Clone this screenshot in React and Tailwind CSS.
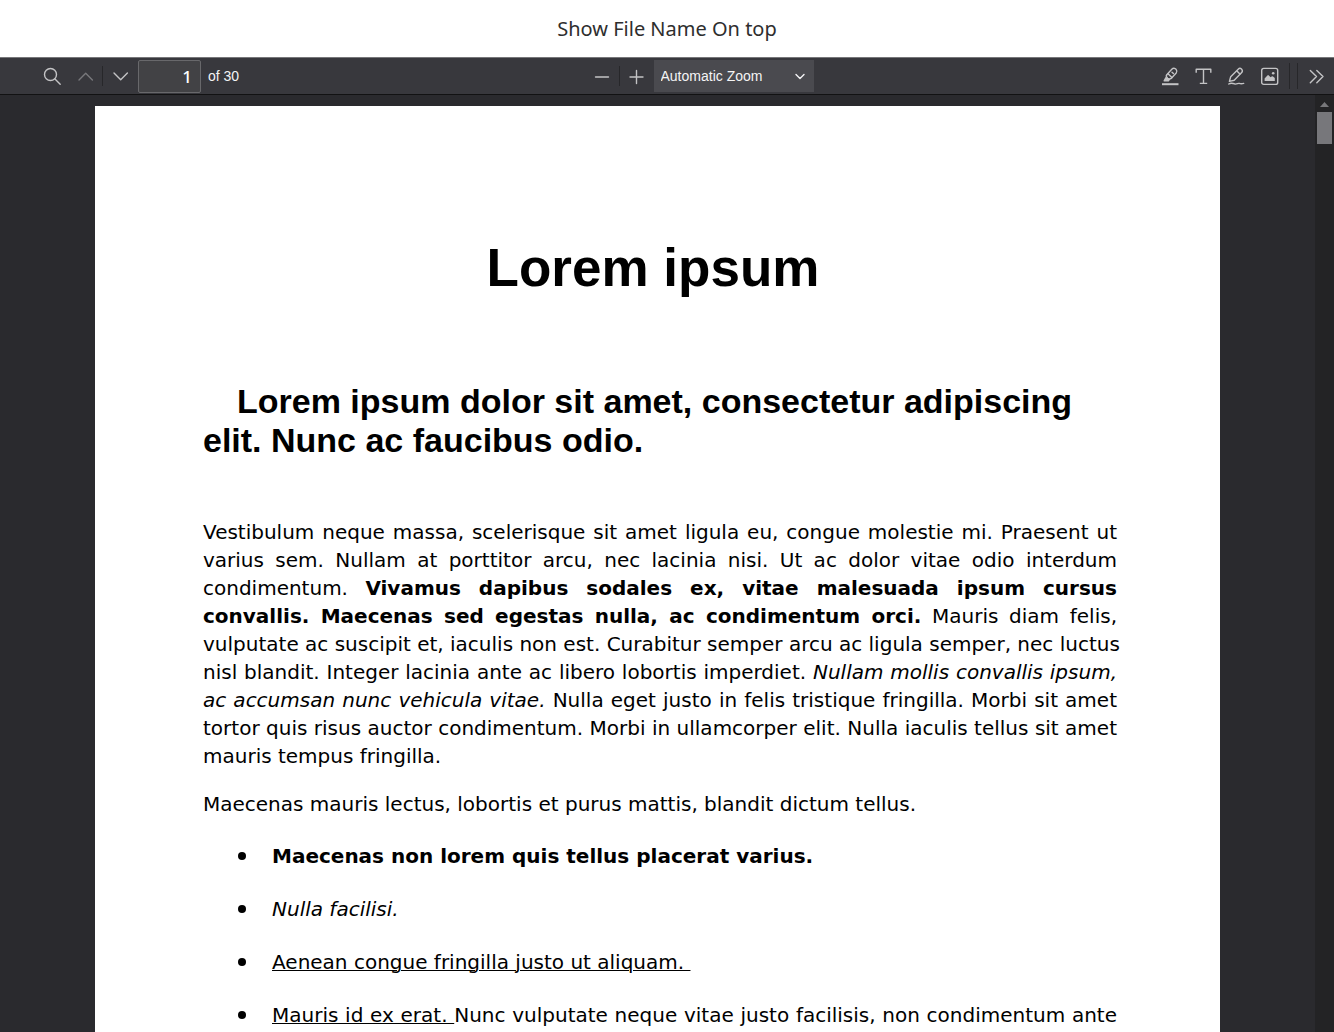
import React from "react";

function Icon({ children, className = "size-5" }) {
  return (
    <svg
      viewBox="0 0 20 20"
      className={className}
      fill="none"
      stroke="currentColor"
      strokeWidth="1.4"
      strokeLinecap="round"
      strokeLinejoin="round"
      aria-hidden="true"
    >
      {children}
    </svg>
  );
}

function ToolButton({ label, disabled, children, className = "w-[33px]" }) {
  return (
    <button
      type="button"
      aria-label={label}
      title={label}
      disabled={disabled}
      className={`flex h-8 shrink-0 items-center justify-center text-[#c3c3c5] disabled:text-[#78787c] ${className}`}
    >
      {children}
    </button>
  );
}

function Separator({ className = "h-5" }) {
  return <span className={`w-px shrink-0 bg-[#27272a] ${className}`} />;
}

function Toolbar() {
  return (
    <div className="grid h-[38px] shrink-0 grid-cols-[1fr_auto_1fr] items-center border-t border-b border-t-[#77777a] border-b-[#121213] bg-[#38383d] font-['Liberation_Sans',Arial,sans-serif] text-[14px] text-[#f4f4f5]">
      <div className="flex items-center pl-9">
        <ToolButton label="Find in document">
          <Icon>
            <circle cx="7.5" cy="8.5" r="6" />
            <path d="M12 13 17.2 18.2" />
          </Icon>
        </ToolButton>
        <ToolButton label="Previous page" disabled>
          <Icon>
            <path d="M3 14 9.7 7.3 16.4 14" />
          </Icon>
        </ToolButton>
        <Separator />
        <ToolButton label="Next page">
          <Icon>
            <path d="M4 7 10.7 13.7 17.4 7" />
          </Icon>
        </ToolButton>
        <input
          type="text"
          aria-label="Page number"
          defaultValue="1"
          className="ml-0.5 h-[33px] w-[63px] rounded-xs border border-[#68686b] bg-[#424245] pr-2 text-right font-['Noto_Sans',sans-serif] text-[17px] font-medium text-white outline-none"
        />
        <span className="ml-[7px] whitespace-nowrap">of 30</span>
      </div>

      <div className="flex items-center pl-[65px]">
        <ToolButton label="Zoom out">
          <Icon>
            <path d="M3.5 11H16.5" />
          </Icon>
        </ToolButton>
        <Separator />
        <ToolButton label="Zoom in">
          <Icon>
            <path d="M4 11H17M10.5 4.5V17.5" />
          </Icon>
        </ToolButton>
        <div className="ml-px grid w-40 items-center">
          <select
            aria-label="Zoom"
            className="col-start-1 row-start-1 h-8 w-full appearance-none bg-[#4a4a4f] pl-[7px] text-[14px] outline-none"
          >
            <option>Automatic Zoom</option>
            <option>Actual Size</option>
            <option>Page Fit</option>
            <option>Page Width</option>
          </select>
          <Icon className="pointer-events-none col-start-1 row-start-1 mr-1 size-5 justify-self-end">
            <path d="M6 8.5 10 12.5 14 8.5" />
          </Icon>
        </div>
      </div>

      <div className="flex items-center justify-end">
        <ToolButton label="Highlight">
          <Icon>
            <path d="M1 18.2H17.5" strokeWidth="2" strokeLinecap="butt" />
            <path d="M5.8 8.7 10.8 3.2Q12.6 1.4 14.4 2.8L15.2 3.6Q16.6 5.2 15.2 7L10.2 12.4Q8.4 13.8 6.6 12.2L6.2 11.8Q4.6 10.4 5.8 8.7Z" />
            <path d="M7 7.7 10.9 11.4M11 6.2 12.4 7.6" />
            <path d="M4.8 11.8 3.2 14.8H7.4L8.4 13.4Z" fill="currentColor" />
          </Icon>
        </ToolButton>
        <ToolButton label="Text">
          <Icon>
            <path d="M2.2 6V3.2H16.8V6M9.5 3.2V17.2M6.5 17.4H12.5" strokeLinecap="square" />
          </Icon>
        </ToolButton>
        <ToolButton label="Draw">
          <Icon>
            <path d="M3.7 10.8 11.2 3.2Q12.8 1.6 14.5 3Q16.2 4.8 14.7 6.6L7.2 14.2L2.4 15.4Z" />
            <path d="M10.2 5.2 12.9 8" />
            <path d="M1.7 18C4.2 16.6 6.2 17.4 7.8 18S11.2 17 12.2 17.4S14.7 18 16.7 17.4" />
          </Icon>
        </ToolButton>
        <ToolButton label="Add or edit images">
          <Icon>
            <rect x="1.7" y="2.4" width="16" height="16" rx="2" />
            <path
              d="M4.6 15V12.4L7.4 9.4Q8.1 8.8 8.8 9.4L10.6 11.2L11.6 10.4Q12.4 9.9 13 10.4L14.8 12V15Z"
              fill="currentColor"
              stroke="none"
            />
            <circle cx="13.2" cy="7.3" r="1.3" fill="currentColor" stroke="none" />
          </Icon>
        </ToolButton>
        <div className="ml-[3px] flex gap-[7px]">
          <Separator className="h-[26px]" />
          <Separator className="h-[26px]" />
        </div>
        <ToolButton label="Tools" className="w-9">
          <Icon>
            <path d="M4.3 4.4 10.5 10.6 4.3 16.8M10.8 4.4 17 10.6 10.8 16.8" />
          </Icon>
        </ToolButton>
      </div>
    </div>
  );
}

function Scrollbar() {
  return (
    <div className="flex w-[19px] shrink-0 flex-col items-center bg-[#232325]">
      <svg viewBox="0 0 19 17" className="h-[17px] w-[19px]" aria-hidden="true">
        <path d="M5 12 9.5 7 14 12Z" fill="#77777a" />
      </svg>
      <div className="h-8 w-[15px] bg-[#77777b]" />
    </div>
  );
}

function Bullet({ children }) {
  return (
    <li className="flex items-center">
      <span className="mr-[26px] ml-[35px] size-2 shrink-0 rounded-full bg-black" />
      {children}
    </li>
  );
}

function Page() {
  return (
    <article className="mx-auto mt-[11px] w-full max-w-[1125px] bg-white pt-[131px] pr-[103px] pb-24 pl-[108px] font-['DejaVu_Sans',sans-serif] text-[20px] leading-7 text-black">
      <h1 className="pr-3.5 text-center font-['Liberation_Sans',Arial,sans-serif] text-[53px] leading-[62px] font-bold">
        Lorem ipsum
      </h1>
      <h2 className="mt-[83px] indent-[34px] font-['Liberation_Sans',Arial,sans-serif] text-[34px] leading-[39px] font-bold">
        Lorem ipsum dolor sit amet, consectetur adipiscing elit. Nunc ac faucibus odio.
      </h2>
      <p className="mt-[58px] text-justify whitespace-nowrap [text-align-last:justify]">
        Vestibulum neque massa, scelerisque sit amet ligula eu, congue molestie mi. Praesent ut
        <br />
        varius sem. Nullam at porttitor arcu, nec lacinia nisi. Ut ac dolor vitae odio interdum
        <br />
        condimentum. <strong>Vivamus dapibus sodales ex, vitae malesuada ipsum cursus</strong>
        <br />
        <strong>convallis. Maecenas sed egestas nulla, ac condimentum orci.</strong> Mauris diam
        felis,
        <br />
        vulputate ac suscipit et, iaculis non est. Curabitur semper arcu ac ligula semper, nec
        luctus
        <br />
        nisl blandit. Integer lacinia ante ac libero lobortis imperdiet.{" "}
        <em>Nullam mollis convallis ipsum,</em>
        <br />
        <em>ac accumsan nunc vehicula vitae.</em> Nulla eget justo in felis tristique fringilla.
        Morbi sit amet
        <br />
        tortor quis risus auctor condimentum. Morbi in ullamcorper elit. Nulla iaculis tellus sit
        amet
        <span className="block [text-align-last:left]">mauris tempus fringilla.</span>
      </p>
      <p className="mt-5">
        Maecenas mauris lectus, lobortis et purus mattis, blandit dictum tellus.
      </p>
      <ul className="mt-6 flex flex-col gap-[25px]">
        <Bullet>
          <strong>Maecenas non lorem quis tellus placerat varius.</strong>
        </Bullet>
        <Bullet>
          <em>Nulla facilisi.</em>
        </Bullet>
        <Bullet>
          <u className="decoration-1">Aenean congue fringilla justo ut aliquam.&nbsp;</u>
        </Bullet>
        <Bullet>
          <span className="grow text-justify [text-align-last:justify]">
            <u className="decoration-1">Mauris id ex erat. </u>
            Nunc vulputate neque vitae justo facilisis, non condimentum ante
          </span>
        </Bullet>
      </ul>
    </article>
  );
}

export default function App() {
  return (
    <div className="flex h-screen flex-col overflow-hidden bg-white">
      <header className="flex h-[57px] shrink-0 items-center justify-center font-['Noto_Sans',sans-serif] text-[20px] text-[#2e2e2e]">
        Show File Name On top
      </header>
      <Toolbar />
      <div className="flex min-h-0 grow bg-[#2a2a2e]">
        <main className="min-w-0 grow overflow-hidden">
          <Page />
        </main>
        <Scrollbar />
      </div>
    </div>
  );
}
